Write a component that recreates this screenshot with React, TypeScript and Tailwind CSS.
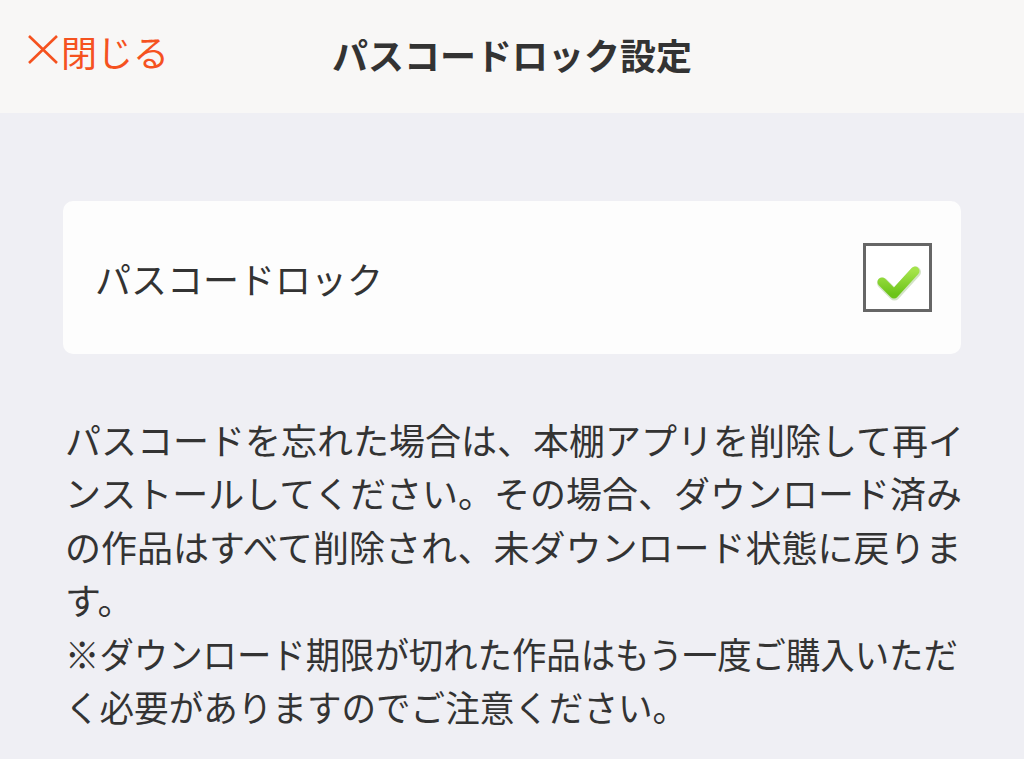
import React, { useState } from "react";

const font = { fontFamily: '"Noto Sans CJK JP", "Noto Sans", sans-serif' };

function CheckBox({ checked, onToggle }: { checked: boolean; onToggle: () => void }) {
  return (
    <button
      onClick={onToggle}
      className="w-[69px] h-[69px] border-[3px] border-[#666666] bg-white flex items-center justify-center"
    >
      {checked && (
        <svg width="56" height="56" viewBox="0 0 56 56">
          <defs>
            <linearGradient id="chk" x1="0" y1="0" x2="0" y2="1">
              <stop offset="0" stopColor="#a4e34a" />
              <stop offset="1" stopColor="#6cc419" />
            </linearGradient>
          </defs>
          <path
            d="M12 32 L24 44 L45 21"
            fill="none"
            stroke="#4f8f1a"
            strokeOpacity="0.25"
            strokeWidth="11"
            strokeLinecap="round"
            strokeLinejoin="round"
            transform="translate(0.5 1)"
          />
          <path
            d="M12 32 L24 44 L45 21"
            fill="none"
            stroke="url(#chk)"
            strokeWidth="9"
            strokeLinecap="round"
            strokeLinejoin="round"
          />
        </svg>
      )}
    </button>
  );
}

export default function App() {
  const [locked, setLocked] = useState(true);

  return (
    <div className="w-[1024px] h-[759px] bg-[#efeff4] overflow-hidden text-[#333333]" style={font}>
      {/* header */}
      <div className="h-[113px] bg-[#f8f7f6] relative flex items-center justify-center">
        <button className="absolute left-[27px] top-[27px] flex items-center text-[#f5521f] text-[36px] leading-[48px]">
          <svg width="33" height="36" viewBox="0 0 33 36" className="mr-[1px]">
            <path d="M2 9 L30 36 M30 9 L2 36" stroke="#f5521f" strokeWidth="2.6" fill="none" transform="translate(0 -6)" />
          </svg>
          閉じる
        </button>
        <h1 className="text-[36px] font-bold leading-[48px] -mt-[6px] text-[#333333]">パスコードロック設定</h1>
      </div>

      <div className="px-[63px] pt-[88px]">
        {/* card */}
        <div className="h-[153px] bg-[#fdfdfd] rounded-[10px] flex items-center justify-between pl-[32px] pr-[29px]">
          <span className="text-[36px] leading-[48px]">パスコードロック</span>
          <CheckBox checked={locked} onToggle={() => setLocked(!locked)} />
        </div>

        {/* notes */}
        <div className="mt-[59px] pl-[2px] text-[36px] leading-[53.4px] whitespace-nowrap">
          <div>パスコードを忘れた場合は、本棚アプリを削除して再イ</div>
          <div>ンストールしてください。その場合、ダウンロード済み</div>
          <div>の作品はすべて削除され、未ダウンロード状態に戻りま</div>
          <div>す。</div>
          <div className="origin-left scale-x-[0.955]">※ダウンロード期限が切れた作品はもう一度ご購入いただ</div>
          <div className="origin-left scale-x-[0.96]">く必要がありますのでご注意ください。</div>
        </div>
      </div>
    </div>
  );
}
